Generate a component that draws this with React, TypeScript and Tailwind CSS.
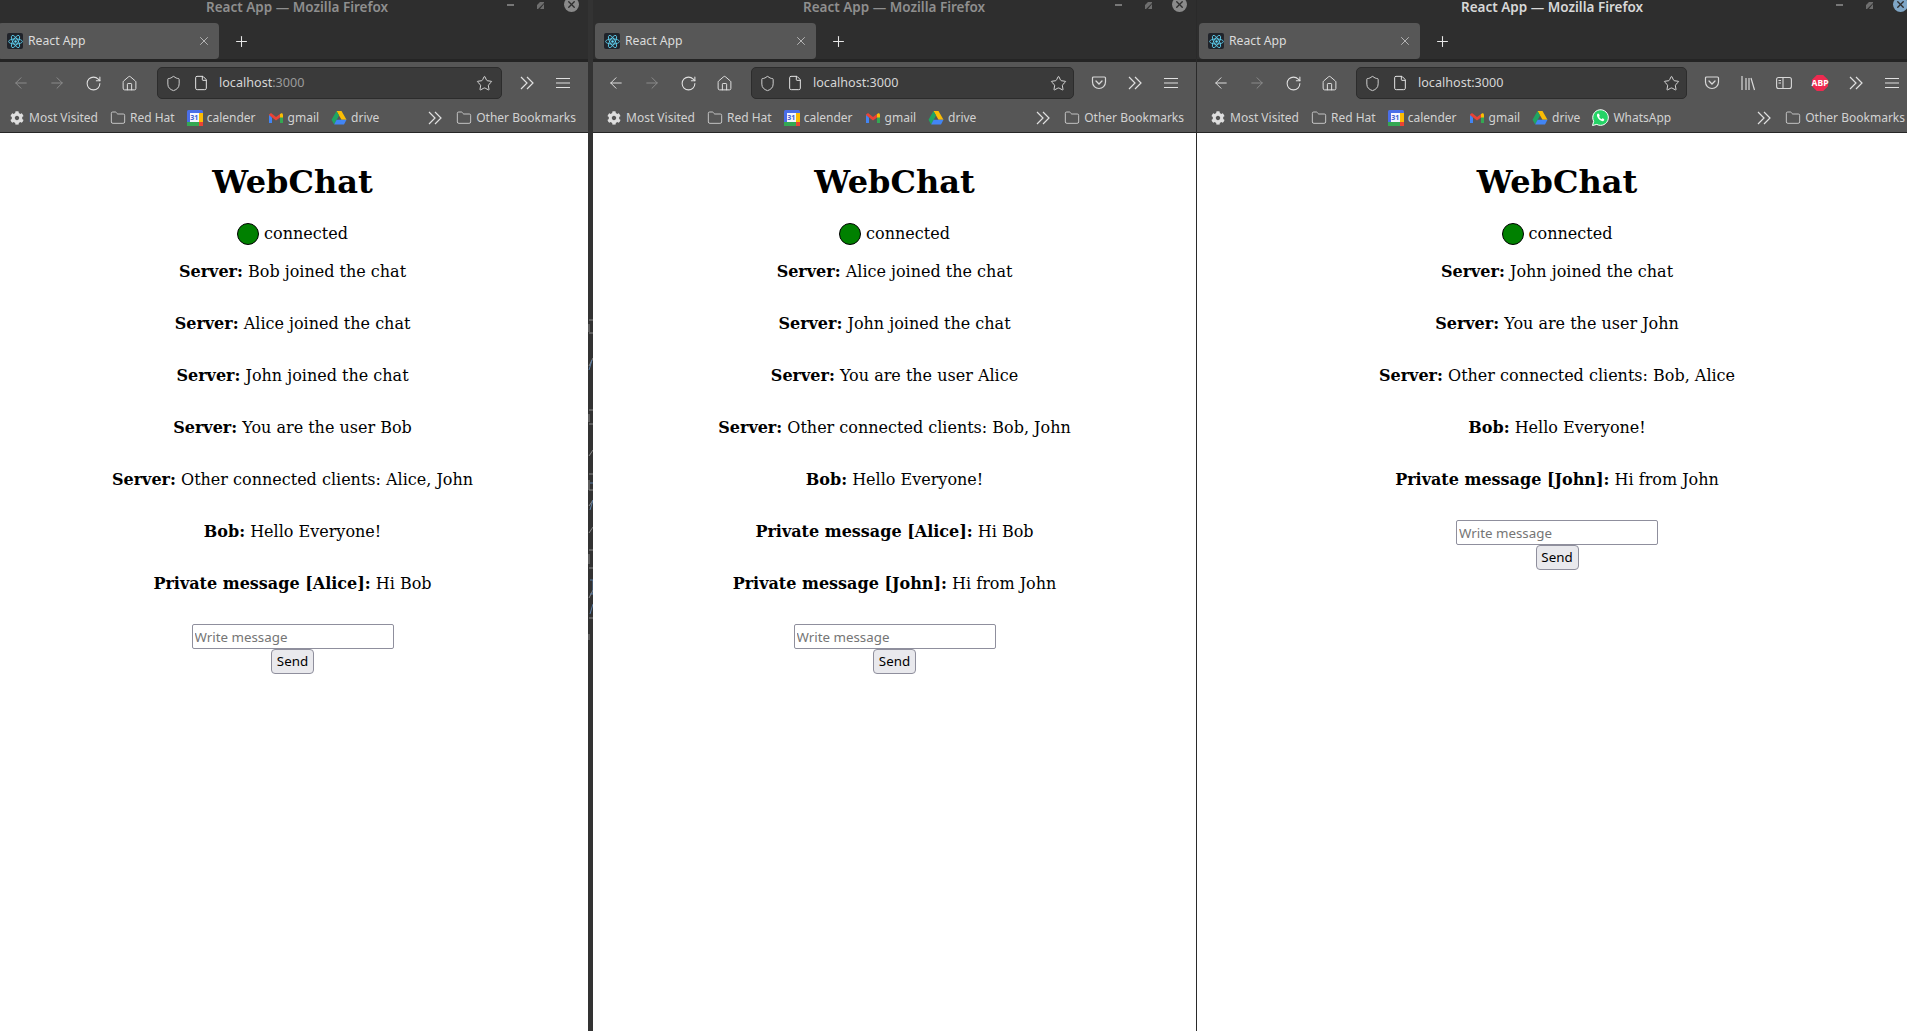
import React from 'react';
import { ArrowLeft, ArrowRight, RotateCw, House, Shield, File, Star, Folder, X, Plus } from 'lucide-react';
import { FaCog } from 'react-icons/fa';

const ReactIcon = () => (
  <span className="w-4 h-4 bg-[#20232a] rounded-[2px] flex items-center justify-center shrink-0">
    <svg width="15" height="15" viewBox="-12 -12 24 24" fill="none" stroke="#61dafb" strokeWidth="1.3">
      <circle r="2" fill="#61dafb" stroke="none" />
      <ellipse rx="11" ry="4.2" />
      <ellipse rx="11" ry="4.2" transform="rotate(60)" />
      <ellipse rx="11" ry="4.2" transform="rotate(120)" />
    </svg>
  </span>
);

const CalendarIcon = () => (
  <span className="w-4 h-4 relative flex items-center justify-center shrink-0">
    <svg width="16" height="16" viewBox="0 0 16 16">
      <rect width="16" height="16" rx="1.500" fill="#4a6ee8" />
      <rect x="12" y="3" width="4" height="10" fill="#fbbc04" />
      <rect y="12" width="12" height="4" fill="#34a853" />
      <rect x="12" y="12" width="4" height="4" fill="#ea4335" />
      <rect x="3" y="3" width="9" height="9" fill="#f4f4ff" />
    </svg>
    <span className="absolute left-[3px] top-[3px] w-[9px] text-center text-[7px] font-bold leading-[9px] text-[#3f5fd0]">31</span>
  </span>
);

const GmailIcon = () => (
  <svg width="16" height="16" viewBox="0 0 16 16" className="shrink-0">
    <path d="M1 4.500V13h3V7.500z" fill="#4285f4" />
    <path d="M15 4.500V13h-3V7.500z" fill="#34a853" />
    <path d="M1 4.500 3 3l5 4 4-3v3.500L8 10.500 1 5z" fill="#ea4335" />
    <path d="M12 4l2-1 1 1.500v3L12 7.500z" fill="#fbbc04" />
  </svg>
);

const DriveIcon = () => (
  <svg width="16" height="16" viewBox="0 0 16 16" className="shrink-0">
    <path d="M5.500 1h5l5 8.800h-5z" fill="#fbbc04" />
    <path d="M5.500 1 8 5.500 3.200 14.500.5 9.800z" fill="#1fa463" />
    <path d="M3.200 14.500 5.600 9.800h9.900L13 14.500z" fill="#4285f4" />
  </svg>
);

const WhatsAppIcon = () => (
  <svg width="17" height="17" viewBox="0 0 17 17" className="shrink-0">
    <path d="M.5 16.500l1.200-4.200A7.800 7.800 0 1 1 4.800 15.400z" fill="#25d366" stroke="#fff" strokeWidth="1" />
    <path d="M6 4.600c-.6.3-1.200 1-1 2.200.3 2 2.800 4.800 5 5.300 1.200.2 2-.5 2.200-1.200l-.1-.8-1.700-.8-.8.9c-1-.3-2.100-1.500-2.500-2.400l.7-.9-.7-1.900z" fill="#fff" />
  </svg>
);

const Chevrons = () => (
  <svg width="16" height="16" viewBox="0 0 16 16" fill="none" stroke="#e0e0e0" strokeWidth="1.200" className="shrink-0">
    <path d="M2 2l6 6-6 6M8 2l6 6-6 6" />
  </svg>
);

const PocketIcon = () => (
  <svg width="16" height="16" viewBox="0 0 16 16" fill="none" stroke="#d8d8d8" strokeWidth="1.200">
    <path d="M2.500 2h11a1 1 0 0 1 1 1v4a6.500 6.500 0 0 1-13 0V3a1 1 0 0 1 1-1z" />
    <path d="M5 6l3 3 3-3" strokeWidth="1.300" strokeLinecap="round" />
  </svg>
);

const LibraryIcon = () => (
  <svg width="16" height="16" viewBox="0 0 16 16" fill="none" stroke="#d8d8d8" strokeWidth="1.200">
    <path d="M2 1v14M6 3v12M9 3v12M11 3l3.500 12" />
  </svg>
);

const SidebarIcon = () => (
  <svg width="16" height="16" viewBox="0 0 16 16" fill="none" stroke="#d8d8d8" strokeWidth="1.100">
    <rect x="0.600" y="2.500" width="14.800" height="11" rx="2" />
    <path d="M7 2.500v11M2.500 5.500h2.500M2.500 8h2.500" />
  </svg>
);

const AbpIcon = () => (
  <span className="w-4 h-4 relative flex items-center justify-center">
    <svg width="16" height="16" viewBox="0 0 16 16" className="shrink-0">
      <path d="M4.800 0h6.400L16 4.800v6.400L11.200 16H4.800L0 11.200V4.800z" fill="#ee2a50" />
    </svg>
    <span className="absolute text-[8.500px] font-bold text-white leading-none">ABP</span>
  </span>
);

const Gap = ({ children }: { children: React.ReactNode }) => (
  <span className="w-9 h-8 flex items-center justify-center shrink-0">{children}</span>
);

interface Bookmark {
  name: string;
  icon: React.ReactNode;
}

const folderIcon = <Folder size={16} strokeWidth={1.2} className="text-[#dedede] shrink-0" />;

const bookmarks: Bookmark[] = [
  { name: 'Most Visited', icon: <span className="w-4 flex justify-center shrink-0"><FaCog size={14} className="text-[#dedede]" /></span> },
  { name: 'Red Hat', icon: folderIcon },
  { name: 'calender', icon: <CalendarIcon /> },
  { name: 'gmail', icon: <GmailIcon /> },
  { name: 'drive', icon: <DriveIcon /> },
];

interface WindowProps {
  className: string;
  toolbarPad: string;
  titleClass: string;
  closeClass: string;
  urlClass: string;
  pageClass?: string;
  back: string;
  dimPort?: boolean;
  extras: React.ReactNode;
  whatsapp?: boolean;
  messages: [string, string][];
}

const BrowserWindow: React.FC<WindowProps> = ({ className, toolbarPad, titleClass, closeClass, urlClass, pageClass, back, dimPort, extras, whatsapp, messages }) => {
  const marks = whatsapp ? [...bookmarks, { name: 'WhatsApp', icon: <WhatsAppIcon /> }] : bookmarks;
  return (
    <div className={`flex flex-col shrink-0 h-full bg-white ${className}`}>
      {/* Title bar */}
      <div className="h-[23px] bg-[#2e2e2e] flex items-start shrink-0 overflow-hidden">
        <span className={`text-[13.500px] font-semibold leading-[14px] whitespace-nowrap ${titleClass}`}>React App — Mozilla Firefox</span>
        <span className="ml-auto flex items-start pr-[9px]">
          <span className="w-[7px] h-[2px] bg-[#777777] mt-[4px]" />
          <svg width="7" height="7" viewBox="0 0 7 7" className="ml-[23px] mt-[2px]">
            <path d="M0 7V3l3-3h4v1L1 7zM7 2v5H3z" fill="#6e6e6e" />
          </svg>
          <span className={`w-[15px] h-[15px] rounded-full flex items-center justify-center -mt-[3px] ml-[20px] ${closeClass}`}>
            <X size={11} strokeWidth={3} className="text-[#2e2e2e]" />
          </span>
        </span>
      </div>

      {/* Tab strip */}
      <div className="h-[39px] bg-[#2e2e2e] border-b-[3px] border-[#242424] shrink-0 pl-[2px] flex items-start">
        <div className="w-[221px] h-[36px] bg-[#575757] rounded-[4px] flex items-center pl-[9px] pr-[8px] gap-[5px] text-[#dcdcdc]">
          <ReactIcon />
          <span className="text-[12.200px] flex-1 whitespace-nowrap pt-[1px]">React App</span>
          <X size={14} strokeWidth={1.2} />
        </div>
        <Plus size={17} strokeWidth={1.5} className="text-[#e8e8e8] ml-[14px] mt-[10px]" />
      </div>

      {/* Toolbar */}
      <div className={`h-[41px] pt-[5px] pb-[4px] bg-[#565656] flex items-center shrink-0 pr-[7px] ${toolbarPad}`}>
        <Gap><ArrowLeft size={18} strokeWidth={1.3} className={back} /></Gap>
        <Gap><ArrowRight size={18} strokeWidth={1.3} className="text-[#8c8c8c]" /></Gap>
        <Gap><RotateCw size={17} strokeWidth={1.5} className="text-[#e0e0e0]" /></Gap>
        <Gap><House size={17} strokeWidth={1.4} className="text-[#e0e0e0]" /></Gap>
        <div className={`flex-1 h-8 mr-[7px] bg-[#3a3a3a] border border-[#2c2c2c] rounded-[5px] flex items-center pl-[7px] ${urlClass}`}>
          <Shield size={17} strokeWidth={1.3} className="text-[#dcdcdc] shrink-0" />
          <File size={16} strokeWidth={1.5} className="text-[#e4e4e4] ml-[11px] shrink-0" />
          <span className="ml-[10px] text-[12.600px] text-[#d6d6d6] whitespace-nowrap">
            localhost<span className={dimPort ? 'text-[#9a9a9a]' : ''}>:3000</span>
          </span>
          <Star size={17} strokeWidth={1.3} className="text-[#e0e0e0] ml-auto shrink-0" />
        </div>
        {extras}
        <Gap><Chevrons /></Gap>
        <Gap>
          <svg width="14" height="12" viewBox="0 0 14 12" stroke="#e0e0e0" strokeWidth="1.200">
            <path d="M0 1.500h14M0 6h14M0 10.500h14" />
          </svg>
        </Gap>
      </div>

      {/* Bookmarks */}
      <div className="h-[30px] bg-[#565656] border-b border-[#262626] flex items-center shrink-0 pl-[13px] pr-[12px] text-[12px] text-[#d2d2d2] whitespace-nowrap">
        <div className="flex items-center gap-[12px]">
          {marks.map(m => (
            <span key={m.name} className="flex items-center gap-[4px]">
              {m.icon}
              {m.name}
            </span>
          ))}
        </div>
        <span className="ml-auto"><Chevrons /></span>
        <span className="flex items-center gap-[4px] ml-[13px]">
          {folderIcon}
          Other Bookmarks
        </span>
      </div>

      {/* Page */}
      <div className={`flex-1 bg-white text-black flex flex-col items-center text-center pt-[30px] font-['DejaVu_Serif',serif] ${pageClass ?? ''}`}>
        <h1 className="text-[32px] leading-[38px] font-bold">WebChat</h1>
        <div className="flex items-center gap-[5px] mt-[21px] h-[23px]">
          <span className="w-[22px] h-[22px] rounded-full bg-[#008000] border border-black" />
          <span className="text-[16px] leading-[19px]">connected</span>
        </div>
        <div className="mt-[17px] flex flex-col gap-[33px] text-[16px] leading-[19px]">
          {messages.map(([who, text]) => (
            <p key={who + text}>
              <b>{who}:</b> {text}
            </p>
          ))}
        </div>
        <input
          readOnly
          placeholder="Write message"
          className="mt-[31px] w-[202px] h-[25px] px-[2px] bg-white border border-[#8f8f9d] rounded-[2px] text-[13.330px] font-['Noto_Sans',sans-serif] placeholder:text-[#757575] outline-none"
        />
        <button className="w-[43px] h-[25px] pt-px bg-[#e9e9ed] border border-[#8f8f9d] rounded-[4px] text-[13.330px] text-black font-['Noto_Sans',sans-serif]">
          Send
        </button>
      </div>
    </div>
  );
};

// leftovers of the window behind, showing through the gap
const Divider = () => (
  <div className="w-[5px] shrink-0 h-full bg-[#333333] pt-[318px]">
    <svg width="5" height="336" viewBox="0 0 5 336" fill="none" strokeWidth="1">
      <path d="M1 2h4M1 6v8M1 15h4M1 48l4-8M1 92h4M1 96v8M1 106h4M1 138l4-6M1 156h4M1 162v10M1 172h4M1 188l4-6M1 215l4-6M1 232h4M1 236v10M1 250h4M1 280l4-8M1 300h4M1 316v6" stroke="#8a8a8a" />
      <path d="M1 52l3-10M2 165h3M2 192l3-10M2 262h3v14h-3M2 296l3-10" stroke="#5b7fa8" />
    </svg>
  </div>
);

const firstMessages: [string, string][] = [
  ['Server', 'Bob joined the chat'],
  ['Server', 'Alice joined the chat'],
  ['Server', 'John joined the chat'],
  ['Server', 'You are the user Bob'],
  ['Server', 'Other connected clients: Alice, John'],
  ['Bob', 'Hello Everyone!'],
  ['Private message [Alice]', 'Hi Bob'],
];

const secondMessages: [string, string][] = [
  ['Server', 'Alice joined the chat'],
  ['Server', 'John joined the chat'],
  ['Server', 'You are the user Alice'],
  ['Server', 'Other connected clients: Bob, John'],
  ['Bob', 'Hello Everyone!'],
  ['Private message [Alice]', 'Hi Bob'],
  ['Private message [John]', 'Hi from John'],
];

const thirdMessages: [string, string][] = [
  ['Server', 'John joined the chat'],
  ['Server', 'You are the user John'],
  ['Server', 'Other connected clients: Bob, Alice'],
  ['Bob', 'Hello Everyone!'],
  ['Private message [John]', 'Hi from John'],
];

export default function App() {
  return (
    <div className="w-[1907px] h-[1031px] overflow-hidden flex bg-white font-['Noto_Sans',sans-serif]">
      <BrowserWindow
        className="w-[592px] -ml-1"
        toolbarPad="pl-[7px]"
        titleClass="ml-[210px] text-[#8f8f8f]"
        closeClass="bg-[#8a8a8a]"
        urlClass="ml-[10px] pr-[8px]"
        pageClass="pl-px"
        back="text-[#8c8c8c]"
        dimPort
        extras={null}
        messages={firstMessages}
      />
      <Divider />
      <BrowserWindow
        className="w-[603px]"
        toolbarPad="pl-[5px]"
        titleClass="ml-[210px] text-[#8f8f8f]"
        closeClass="bg-[#8a8a8a]"
        urlClass="ml-[9px] pr-[6px]"
        back="text-[#e0e0e0]"
        extras={<Gap><PocketIcon /></Gap>}
        messages={secondMessages}
      />
      <div className="w-px h-full shrink-0 bg-[#2a2a2a]" />
      <BrowserWindow
        className="w-[720px]"
        toolbarPad="pl-[6px]"
        titleClass="ml-[264px] text-[#d8d8d8]"
        closeClass="bg-[#7fa6c6]"
        urlClass="ml-[9px] pr-[6px]"
        back="text-[#e0e0e0]"
        extras={
          <>
            <Gap><PocketIcon /></Gap>
            <Gap><LibraryIcon /></Gap>
            <Gap><SidebarIcon /></Gap>
            <Gap><AbpIcon /></Gap>
          </>
        }
        whatsapp
        messages={thirdMessages}
      />
    </div>
  );
}
